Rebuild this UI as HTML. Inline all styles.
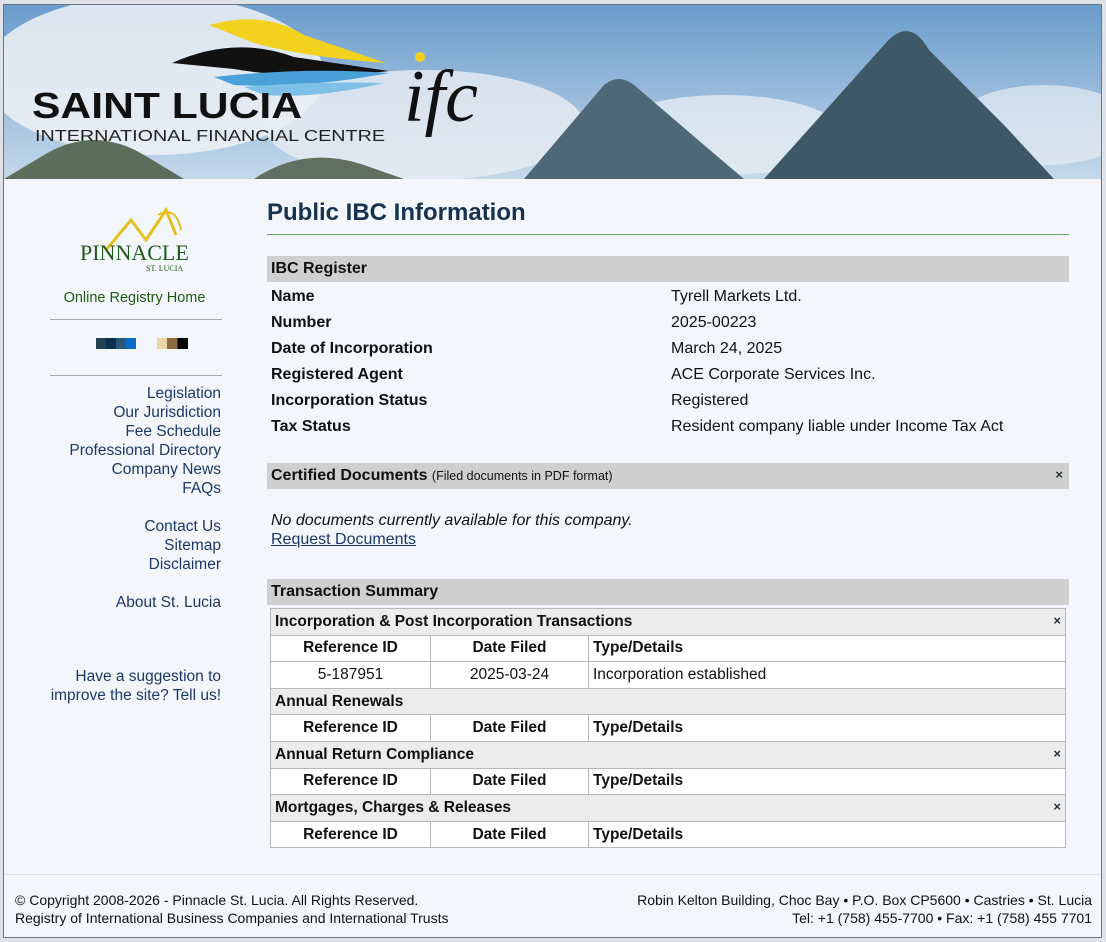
<!DOCTYPE html>
<html><head><meta charset="utf-8"><style>
*{margin:0;padding:0;box-sizing:border-box}
body{width:1106px;height:942px;background:#dfe3e8;font-family:"Liberation Sans",sans-serif;overflow:hidden;position:relative}
#frame{position:absolute;left:3px;top:4px;width:1099px;height:934px;background:#f3f7fb;border:1px solid #6a7580}
#hdr{position:absolute;left:0;top:0;width:1097px;height:174px;overflow:hidden}
.side{position:absolute;color:#1c3866;font-size:15.5px;text-align:right;right:880px;line-height:19px}
.t{position:absolute;font-size:16px;color:#111}
.b{font-weight:bold}
.bar{position:absolute;left:263px;width:802px;height:26px;background:#cfcfcf;font-weight:bold;font-size:16px;padding:4px 0 0 4px;color:#111}
table{position:absolute;left:266px;top:603px;width:796px;border-collapse:collapse;font-size:15.5px;color:#111}
td{border:1px solid #b8b8b8;height:26.6px;padding:0 4px;background:#fff}
td.h{background:#ececec;font-weight:bold}
td.c{text-align:center}
.x{float:right;font-size:13px;font-weight:bold;color:#233}
</style></head><body>
<div id="frame">
<div id="hdr">
<svg width="1097" height="174" viewBox="0 0 1097 174">
<defs><linearGradient id="sky" x1="0" y1="0" x2="0" y2="1"><stop offset="0" stop-color="#6a9ccc"/><stop offset="1" stop-color="#c5d8ea"/></linearGradient></defs>
<rect width="1097" height="174" fill="url(#sky)"/>
<ellipse cx="150" cy="70" rx="170" ry="80" fill="#eef2f6" opacity=".85"/>
<ellipse cx="420" cy="120" rx="160" ry="55" fill="#e8eef4" opacity=".8"/>
<ellipse cx="720" cy="130" rx="120" ry="40" fill="#e6edf4" opacity=".8"/>
<ellipse cx="1040" cy="120" rx="90" ry="40" fill="#e6edf4" opacity=".7"/>
<path d="M520 174 L600 80 Q615 68 630 80 L700 140 L740 174Z" fill="#4f6878"/>
<path d="M760 174 L880 40 Q905 10 925 45 L1000 120 L1050 174Z" fill="#3f5868"/>
<path d="M0 174 L40 150 Q90 120 140 150 L180 174Z" fill="#5a6e5a"/>
<path d="M250 174 Q300 140 360 160 L400 174Z" fill="#5f7060"/>
<path d="M168 58 Q230 30 290 52 L385 66 Q300 76 230 64Z" fill="#111"/>
<path d="M205 20 Q260 5 300 30 L382 58 Q300 52 250 38Z" fill="#f2d21e"/>
<path d="M210 72 Q300 62 385 68 Q300 84 230 80Z" fill="#4aa0d8"/>
<path d="M240 82 Q310 76 380 78 Q310 94 260 90Z" fill="#7fc0e8"/>
<circle cx="416" cy="52" r="5" fill="#f2d21e"/>
<text x="400" y="116" font-family="Liberation Serif,serif" font-style="italic" font-size="74" fill="#111">ifc</text>
<text x="28" y="113" font-family="Liberation Sans,sans-serif" font-weight="bold" font-size="36" fill="#111" textLength="270" lengthAdjust="spacingAndGlyphs">SAINT LUCIA</text>
<text x="31" y="136" font-family="Liberation Sans,sans-serif" font-size="16" fill="#222" textLength="350" lengthAdjust="spacingAndGlyphs">INTERNATIONAL FINANCIAL CENTRE</text>
</svg>
</div>
<svg style="position:absolute;left:72px;top:195px" width="120" height="75">
<path d="M30 50 L55 20 L70 40 L90 10 L100 35" fill="none" stroke="#e5c020" stroke-width="3"/>
<path d="M82 15 Q100 5 105 30" fill="none" stroke="#e5c020" stroke-width="2"/>
<text x="4" y="60" font-family="Liberation Serif,serif" font-size="22" fill="#1f5a1a">PINNACLE</text>
<text x="70" y="71" font-family="Liberation Serif,serif" font-size="8" fill="#1f5a1a">ST. LUCIA</text>
</svg>
<div style="position:absolute;left:40px;width:181px;top:285px;text-align:center;color:#1f5a12;font-size:14.5px">Online Registry Home</div>
<div style="position:absolute;left:46px;width:172px;top:314px;border-top:1px solid #aaa"></div>
<div style="position:absolute;left:92px;top:333px;width:40px;height:11px;background:linear-gradient(90deg,#25404e 0 25%,#0b3050 25% 50%,#2a5878 50% 75%,#0a6ac8 75%)"></div>
<div style="position:absolute;left:153px;top:333px;width:31px;height:11px;background:linear-gradient(90deg,#ecd6a8 0 33%,#8a6a40 33% 66%,#050505 66%)"></div>
<div style="position:absolute;left:46px;width:172px;top:370px;border-top:1px solid #aaa"></div>
<div class="side" style="top:379px">Legislation<br>Our Jurisdiction<br>Fee Schedule<br>Professional Directory<br>Company News<br>FAQs<br><br>Contact Us<br>Sitemap<br>Disclaimer<br><br>About St. Lucia</div>
<div class="side" style="top:662px">Have a suggestion to<br>improve the site? Tell us!</div>

<div style="position:absolute;left:263px;top:194px;font-size:24px;font-weight:bold;color:#16324e">Public IBC Information</div>
<div style="position:absolute;left:263px;top:229px;width:802px;border-top:1px solid #6aaa6a"></div>
<div class="bar" style="top:251px">IBC Register</div>
<div class="t b" style="left:267px;top:279px;line-height:26px">Name<br>Number<br>Date of Incorporation<br>Registered Agent<br>Incorporation Status<br>Tax Status</div>
<div class="t" style="left:667px;top:279px;line-height:26px">Tyrell Markets Ltd.<br>2025-00223<br>March 24, 2025<br>ACE Corporate Services Inc.<br>Registered<br>Resident company liable under Income Tax Act</div>
<div class="bar" style="top:458px">Certified Documents <span style="font-weight:normal;font-size:12.5px">(Filed documents in PDF format)</span><span class="x" style="margin-right:6px">×</span></div>
<div class="t" style="left:267px;top:507px;font-style:italic">No documents currently available for this company.</div>
<div class="t" style="left:267px;top:526px;text-decoration:underline;color:#1c3866">Request Documents</div>
<div class="bar" style="top:574px">Transaction Summary</div>
<table>
<tr><td class="h" colspan="3">Incorporation &amp; Post Incorporation Transactions<span class="x">×</span></td></tr>
<tr><td class="b c" style="width:160px">Reference ID</td><td class="b c" style="width:158px">Date Filed</td><td class="b">Type/Details</td></tr>
<tr><td class="c">5-187951</td><td class="c">2025-03-24</td><td>Incorporation established</td></tr>
<tr><td class="h" colspan="3">Annual Renewals</td></tr>
<tr><td class="b c">Reference ID</td><td class="b c">Date Filed</td><td class="b">Type/Details</td></tr>
<tr><td class="h" colspan="3">Annual Return Compliance<span class="x">×</span></td></tr>
<tr><td class="b c">Reference ID</td><td class="b c">Date Filed</td><td class="b">Type/Details</td></tr>
<tr><td class="h" colspan="3">Mortgages, Charges &amp; Releases<span class="x">×</span></td></tr>
<tr><td class="b c">Reference ID</td><td class="b c">Date Filed</td><td class="b">Type/Details</td></tr>
</table>
<div style="position:absolute;left:0;top:869px;width:1097px;border-top:1px solid #dde2e8"></div>
<div style="position:absolute;left:11px;top:886px;font-size:14px;line-height:18px;color:#111">© Copyright 2008-2026 - Pinnacle St. Lucia. All Rights Reserved.<br>Registry of International Business Companies and International Trusts</div>
<div style="position:absolute;right:9px;top:886px;font-size:14px;line-height:18px;color:#111;text-align:right">Robin Kelton Building, Choc Bay • P.O. Box CP5600 • Castries • St. Lucia<br>Tel: +1 (758) 455-7700 • Fax: +1 (758) 455 7701</div>
</div>
</body></html>
